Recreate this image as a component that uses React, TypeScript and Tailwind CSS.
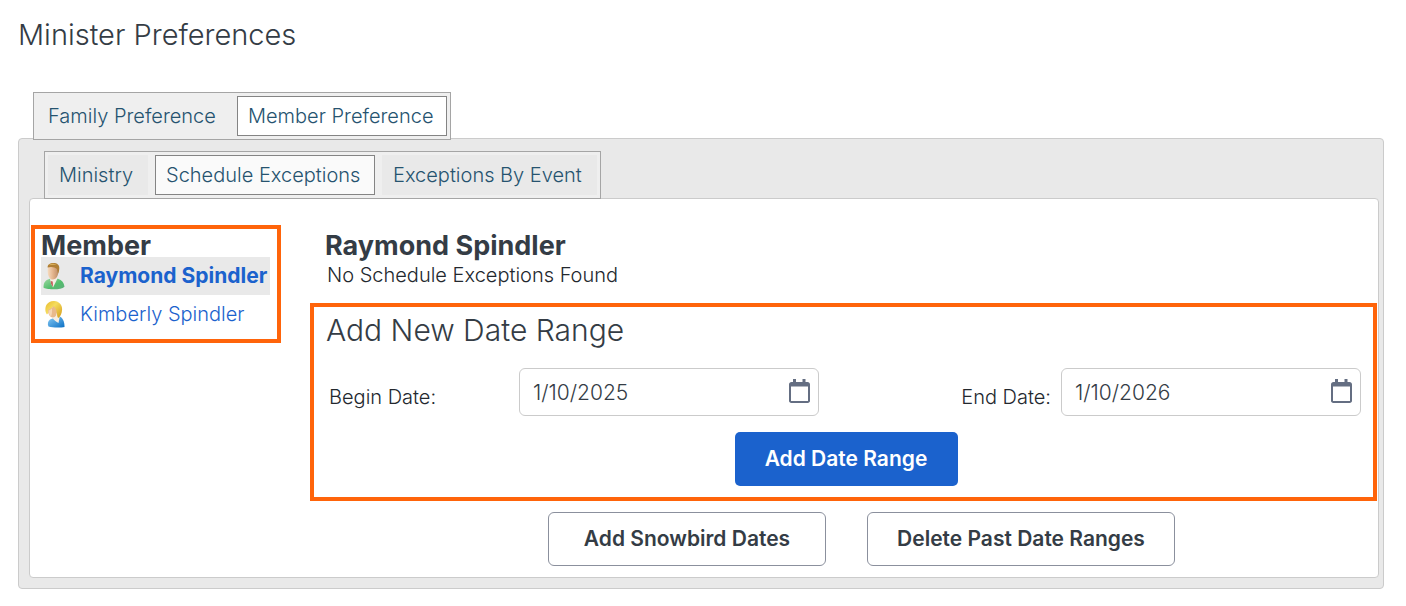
import { useState } from "react";
import type { ReactNode } from "react";

type TabItem = { label: string; width: string };

const mainTabs: TabItem[] = [
  { label: "Family Preference", width: "min-w-[193px]" },
  { label: "Member Preference", width: "min-w-[210px]" },
];

const memberTabs: TabItem[] = [
  { label: "Ministry", width: "min-w-[100px]" },
  { label: "Schedule Exceptions", width: "min-w-[220px]" },
  { label: "Exceptions By Event", width: "min-w-[215px]" },
];

function TabBar({ items, initial, idle, active }: { items: TabItem[]; initial: number; idle: string; active: string }) {
  const [current, setCurrent] = useState(initial);
  return (
    <div role="tablist" className="relative flex w-fit gap-[7px] border border-[#a5a5a5] bg-[#efefef] p-[3px]">
      {items.map((tab, i) => (
        <button
          key={tab.label}
          type="button"
          role="tab"
          aria-selected={i === current}
          onClick={() => setCurrent(i)}
          className={`h-10 border px-[10px] text-left text-[20px] leading-[38px] whitespace-nowrap text-[#26536f] ${tab.width} ${
            i === current ? active : idle
          }`}
        >
          {tab.label}
        </button>
      ))}
    </div>
  );
}

function ManIcon() {
  return (
    <svg width="24" height="28" viewBox="0 0 24 28" aria-hidden="true">
      <defs>
        <linearGradient id="manSkin" x1="0" y1="0" x2="1" y2="0">
          <stop offset="0" stopColor="#f7dcc0" />
          <stop offset="0.5" stopColor="#e2b28a" />
          <stop offset="1" stopColor="#b98a66" />
        </linearGradient>
        <linearGradient id="manShirt" x1="0" y1="0" x2="1" y2="1">
          <stop offset="0" stopColor="#a5dba6" />
          <stop offset="0.6" stopColor="#52bd6c" />
          <stop offset="1" stopColor="#5fae7c" />
        </linearGradient>
      </defs>
      <path d="M1.500 25.500c0-4 1-6.500 4.500-8l5-2 5 1.200c4 1.200 6 4 6.500 8-2 2-7 2.800-12 2.600-4-.2-8-.5-9-1.800z" fill="url(#manShirt)" />
      <path d="M7.500 14.500l1.500 7 2 4 4.500-9-1-3z" fill="#f6ece4" />
      <path d="M8.700 19l2 .6.400 5.400-2-3z" fill="#c4605c" />
      <path d="M6 5c-.8 5-.2 9.500 2.600 12 2 1.500 6.200 0 7.200-4 .8-3 1.400-6 .6-8.500z" fill="url(#manSkin)" />
      <path d="M5.600 5.500C5.600 2.600 7.800 1 11.300 1c4 0 6.300 2 6 5.400-.1 2-.7 4-1.300 5.400L15 7C13 5 9 4.300 5.600 5.500z" fill="#b07f35" />
      <path d="M6.800 3.200c2-1.700 5-1.900 8-.7-2 .7-5 .4-8 .7z" fill="#d6ad5a" />
    </svg>
  );
}

function WomanIcon() {
  return (
    <svg width="24" height="28" viewBox="0 0 24 28" aria-hidden="true">
      <defs>
        <linearGradient id="womanHair" x1="0" y1="0" x2="1" y2="1">
          <stop offset="0" stopColor="#e8b92c" />
          <stop offset="0.4" stopColor="#f5dc5e" />
          <stop offset="1" stopColor="#d39a1c" />
        </linearGradient>
        <linearGradient id="womanShirt" x1="0" y1="0" x2="1" y2="1">
          <stop offset="0" stopColor="#8ccdf5" />
          <stop offset="1" stopColor="#0a6fc4" />
        </linearGradient>
      </defs>
      <path d="M6.500 26.500c-1.200-2-.8-5.500 1.500-7l9-3.500c3.600 1.500 5.600 5.500 5.500 11-4 .8-12 .8-16-.5z" fill="url(#womanShirt)" />
      <path d="M9.500 14.500c.5 3 2 6 7 8.500l1.500-8-3-3z" fill="#f7ede2" />
      <path d="M5 14.500C2.800 12 3 7.500 4.500 4.800 6.200 2 9 .8 12.200 1c5 .3 8.300 4 7.900 8.800-.3 4-1.600 6.800-3.900 8.200-.8-1-1.200-2.500-1.200-4L11 7z" fill="url(#womanHair)" />
      <path d="M6 10c1.800-.6 4-2 5.500-3.700C14.300 8.500 15.500 12 14 15.500c-1.200 2.300-4 2.500-5.700 1C6.800 15 6 12.800 6 10z" fill="#e9b98c" />
      <path d="M6.500 10.500c1-.3 2.500-1.200 3.500-2 .2 3 0 6-1 8-1.600-1.300-2.500-3.500-2.500-6z" fill="#f6d6b4" />
    </svg>
  );
}

function CalendarIcon() {
  return (
    <svg width="22" height="25" viewBox="0 0 22 25" aria-hidden="true">
      <path
        fillRule="evenodd"
        fill="#646e82"
        d="M4 0h3v3h6.500V0h3v3h2c1.500 0 2.500 1 2.500 2.500v16.300c0 1.300-1 2.200-2.300 2.200H2.300C1 24 0 23.100 0 21.800V5.500C0 4 1 3 2.500 3H4zM2 7.500v14.500h17V7.500z"
      />
    </svg>
  );
}

function DateField({ id, value }: { id: string; value: string }) {
  return (
    <div className="relative w-[300px]">
      <input
        id={id}
        type="text"
        defaultValue={value}
        className="h-12 w-full rounded-[6px] border border-[#cbcbcb] bg-white pr-12 pl-[13px] text-[21px] font-light text-[#343c45]"
      />
      <button type="button" aria-label="Open calendar" className="absolute top-[11px] right-2">
        <CalendarIcon />
      </button>
    </div>
  );
}

function Member({ name, icon, selected }: { name: string; icon: ReactNode; selected?: boolean }) {
  return (
    <li
      className={`flex h-[38px] items-center gap-[14px] pl-px ${
        selected ? "bg-[#e9e9e9] text-[21px] font-bold" : "text-[20px]"
      }`}
    >
      {icon}
      <a href="#member" className="leading-6 whitespace-nowrap text-[#1b62cd]">
        {name}
      </a>
    </li>
  );
}

export default function App() {
  return (
    <main className="px-[18px] pt-[18px] font-['Inter',sans-serif] font-light text-[#23282e]">
      <h1 className="text-[29px] leading-[34px] text-[#343c45]">Minister Preferences</h1>

      <div className="mt-10 -mb-[2px] ml-[15px]">
        <TabBar items={mainTabs} initial={1} idle="border-transparent" active="border-[#848484] bg-white" />
      </div>

      <section className="mr-1 rounded-[4px] border border-[#cbcbcb] bg-[#e9e9e9] pt-3 pr-1 pb-[10px] pl-[10px]">
        <div className="-mb-px ml-[15px]">
          <TabBar
            items={memberTabs}
            initial={1}
            idle="border-[#e9e9e9] bg-[#e9e9e9]"
            active="border-[#848484] bg-[#fafafa]"
          />
        </div>

        <div className="flex items-start gap-[29px] rounded-[4px] border border-[#cbcbcb] bg-white px-px pt-[26px] pb-[11px]">
          <nav className="w-[250px] shrink-0 border-4 border-[#ff640a] pt-[2px] pr-[7px] pb-[6px] pl-[6px]">
            <h2 className="h-[26px] text-[27px] leading-[30px] font-bold text-[#343c45]">Member</h2>
            <ul>
              <Member name="Raymond Spindler" icon={<ManIcon />} selected />
              <Member name="Kimberly Spindler" icon={<WomanIcon />} />
            </ul>
          </nav>

          <div className="min-w-0 flex-1">
            <h2 className="pt-[6px] pl-[15px] text-[27px] leading-[30px] font-bold text-[#343c45]">Raymond Spindler</h2>
            <p className="pt-px pb-[15px] pl-[17px] text-[20px] leading-[26px]">No Schedule Exceptions Found</p>

            <form
              onSubmit={(e) => e.preventDefault()}
              className="border-4 border-[#ff640a] pt-[3px] pr-3 pb-[11px] pl-[15px]"
            >
              <h3 className="-ml-[3px] text-[30px] leading-[40px] text-[#343c45]">Add New Date Range</h3>
              <div className="mt-[18px] flex justify-between">
                <div className="flex">
                  <label htmlFor="begin" className="w-[190px] pt-4 text-[20px] leading-[26px]">
                    Begin Date:
                  </label>
                  <DateField id="begin" value="1/10/2025" />
                </div>
                <div className="flex gap-[10px]">
                  <label htmlFor="end" className="pt-4 text-[20px] leading-[26px]">
                    End Date:
                  </label>
                  <DateField id="end" value="1/10/2026" />
                </div>
              </div>
              <div className="mt-4 flex justify-center pl-[2px]">
                <button
                  type="submit"
                  className="h-[54px] w-[223px] rounded-[5px] bg-[#1b62cd] text-[21px] font-semibold text-white"
                >
                  Add Date Range
                </button>
              </div>
            </form>

            <div className="mt-[11px] flex justify-center gap-[41px] pl-9">
              <button
                type="button"
                className="h-[54px] w-[278px] rounded-[6px] border border-[#8b909d] bg-white text-[21px] font-semibold text-[#343c45]"
              >
                Add Snowbird Dates
              </button>
              <button
                type="button"
                className="h-[54px] w-[308px] rounded-[6px] border border-[#8b909d] bg-white text-[21px] font-semibold text-[#343c45]"
              >
                Delete Past Date Ranges
              </button>
            </div>
          </div>
        </div>
      </section>
    </main>
  );
}
